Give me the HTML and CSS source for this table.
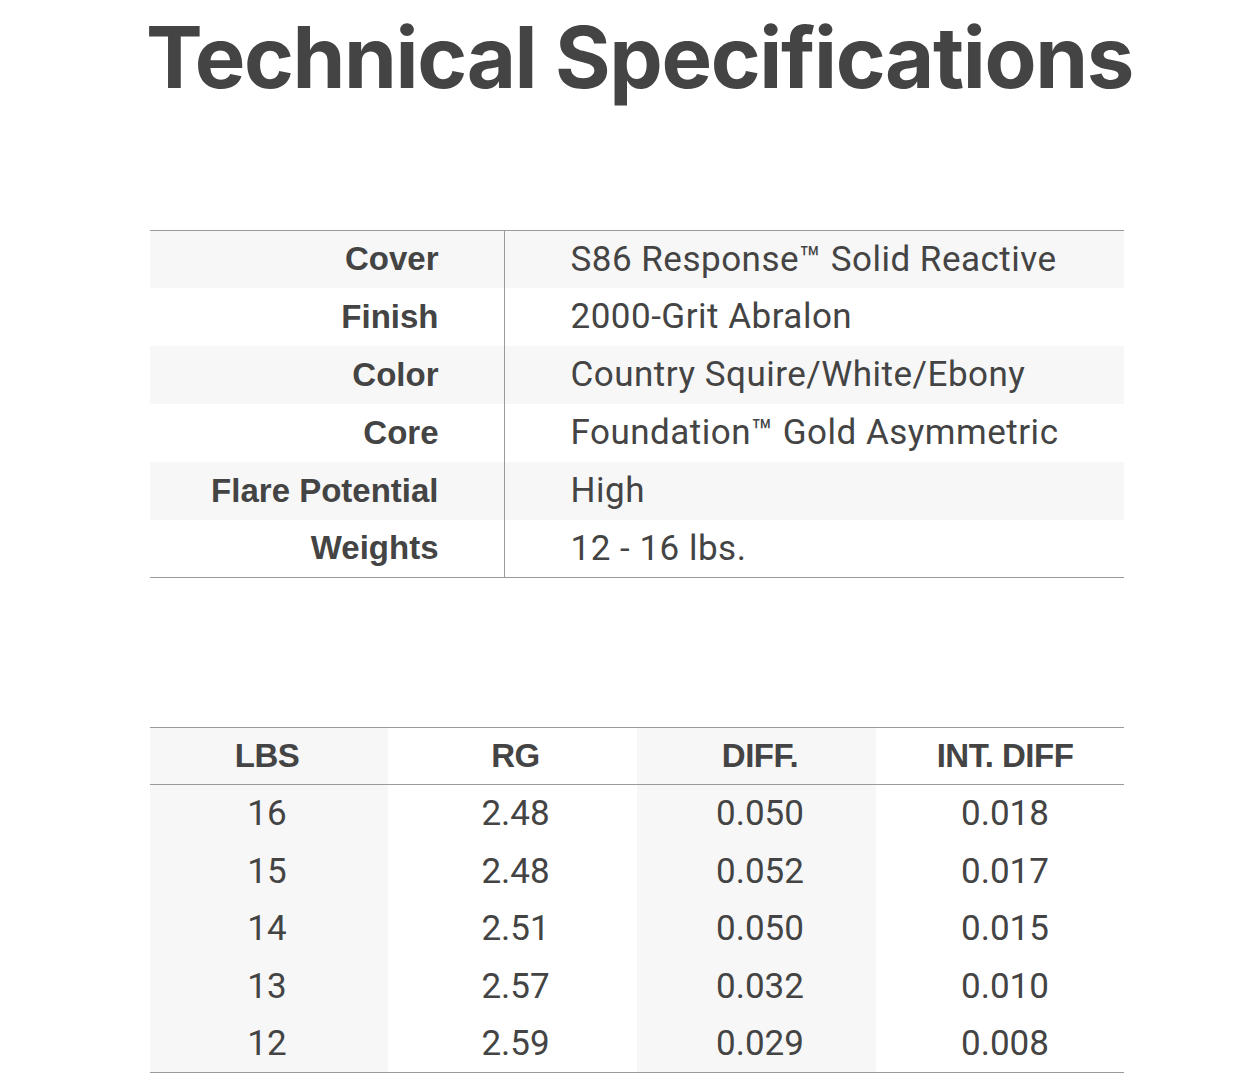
FILE: index.html
```html
<!DOCTYPE html>
<html>
<head>
<meta charset="utf-8">
<link rel="stylesheet" href="styles.css">
</head>
<body>
<div class="page">
  <h1 class="title">Technical Specifications</h1>
  <table class="spec">
    <colgroup><col class="lab"><col class="val"></colgroup>
    <tr class="shade first"><th>Cover</th><td>S86 Response™ Solid Reactive</td></tr>
    <tr class="plain"><th>Finish</th><td>2000-Grit Abralon</td></tr>
    <tr class="shade"><th>Color</th><td>Country Squire/White/Ebony</td></tr>
    <tr class="plain"><th>Core</th><td>Foundation™ Gold Asymmetric</td></tr>
    <tr class="shade"><th>Flare Potential</th><td>High</td></tr>
    <tr class="plain"><th>Weights</th><td>12 - 16 lbs.</td></tr>
  </table>
  <table class="rg">
    <colgroup>
      <col class="c1"><col class="c2"><col class="c3"><col class="c4">
    </colgroup>
    <thead>
      <tr><th>LBS</th><th>RG</th><th>DIFF.</th><th>INT. DIFF</th></tr>
    </thead>
    <tbody>
      <tr class="tall"><td>16</td><td>2.48</td><td>0.050</td><td>0.018</td></tr>
      <tr class="short"><td>15</td><td>2.48</td><td>0.052</td><td>0.017</td></tr>
      <tr class="tall"><td>14</td><td>2.51</td><td>0.050</td><td>0.015</td></tr>
      <tr class="short"><td>13</td><td>2.57</td><td>0.032</td><td>0.010</td></tr>
      <tr class="tall"><td>12</td><td>2.59</td><td>0.029</td><td>0.008</td></tr>
    </tbody>
  </table>
</div>
</body>
</html>
```
FILE: styles.css
```css
html, body {
  margin: 0;
  padding: 0;
  background: #ffffff;
}
.page {
  width: 974px;
  margin-left: 150px;
  color: #444444;
  font-family: Roboto, "Noto Sans", sans-serif;
}
.title {
  margin: 0;
  padding-top: 8px;
  margin-left: -4px;
  font-family: Inter, "Noto Sans", sans-serif;
  font-weight: 700;
  font-size: 85px;
  line-height: 100px;
  letter-spacing: -1.4px;
  color: #444444;
  white-space: nowrap;
}
.spec {
  margin-top: 122px;
  width: 974px;
  border-collapse: collapse;
  table-layout: fixed;
  border-top: 1px solid #9a9a9a;
  border-bottom: 1px solid #9a9a9a;
}
.spec col.lab { width: 354px; }
.spec col.val { width: 620px; }
.spec tr.shade {
  height: 58px;
  background: #f7f7f7;
}
.spec tr.shade.first {
  height: 57px;
}
.spec tr.plain {
  height: 58px;
}
.spec th {
  padding: 0 65px 0 0;
  text-align: right;
  font-family: "Liberation Sans", Arial, sans-serif;
  font-weight: 700;
  font-size: 33px;
  letter-spacing: 0;
  border-right: 1px solid #9a9a9a;
  vertical-align: middle;
  white-space: nowrap;
}
.spec td {
  padding: 0 0 0 66px;
  text-align: left;
  font-size: 35px;
  font-weight: 400;
  letter-spacing: 0.5px;
  vertical-align: middle;
  white-space: nowrap;
}
.rg {
  margin-top: 149px;
  width: 974px;
  border-collapse: collapse;
  table-layout: fixed;
  border-top: 1px solid #9a9a9a;
  border-bottom: 1px solid #9a9a9a;
}
.rg col.c1 { width: 238px; background: #f7f7f7; }
.rg col.c2 { width: 249px; }
.rg col.c3 { width: 239px; background: #f7f7f7; }
.rg col.c4 { width: 248px; }
.rg thead tr {
  height: 57px;
  border-bottom: 1px solid #9a9a9a;
}
.rg th {
  padding: 0;
  text-align: center;
  font-family: "Liberation Sans", Arial, sans-serif;
  font-weight: 700;
  font-size: 33px;
  letter-spacing: -0.5px;
}
.rg tr.tall { height: 58px; }
.rg tr.short { height: 57px; }
.rg td {
  padding: 0;
  text-align: center;
  font-size: 35px;
  font-weight: 400;
}
.rg th:nth-child(1), .rg td:nth-child(1) { padding-right: 4px; }
.rg th:nth-child(2), .rg td:nth-child(2) { padding-left: 6px; }
.rg th:nth-child(3), .rg td:nth-child(3) { padding-left: 7px; }
.rg th:nth-child(4), .rg td:nth-child(4) { padding-left: 10px; }
```
